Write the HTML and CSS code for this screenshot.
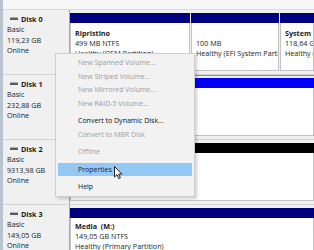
FILE: index.html
```html
<!DOCTYPE html>
<html lang="en">
<head>
    <meta charset="UTF-8">
    <meta name="viewport" content="width=device-width, initial-scale=1.0">
    <title>Disk Management</title>

    <link rel="stylesheet" href="styles.css">
</head>
<body>
    <div class="screen">
        <div class="edge"></div>
        <div class="main">
            <div class="topbar"></div>

            <!-- Disk 0 -->
            <div class="disk">
                <div class="label">
                    <div class="name"><span class="icon"></span>Disk 0</div>
                    <div>Basic</div>
                    <div>119,23 GB</div>
                    <div>Online</div>
                </div>
                <div class="parts">
                    <div class="part w-oem">
                        <div class="bar primary"></div>
                        <div class="box">
                            <div class="title">Ripristino</div>
                            <div>499 MB NTFS</div>
                            <div>Healthy (OEM Partition)</div>
                        </div>
                    </div>
                    <div class="part w-efi">
                        <div class="bar primary"></div>
                        <div class="box">
                            <div class="title"></div>
                            <div>100 MB</div>
                            <div>Healthy (EFI System Partition)</div>
                        </div>
                    </div>
                    <div class="part grow">
                        <div class="bar primary"></div>
                        <div class="box">
                            <div class="title">System</div>
                            <div>118,64 GB NTFS</div>
                            <div>Healthy (Boot, Page File)</div>
                        </div>
                    </div>
                </div>
            </div>

            <!-- Disk 1 -->
            <div class="disk">
                <div class="label">
                    <div class="name"><span class="icon"></span>Disk 1</div>
                    <div>Basic</div>
                    <div>232,88 GB</div>
                    <div>Online</div>
                </div>
                <div class="parts flush">
                    <div class="extended">
                        <div class="part grow">
                            <div class="bar logical"></div>
                            <div class="box tall"></div>
                        </div>
                    </div>
                </div>
            </div>

            <!-- Disk 2 -->
            <div class="disk">
                <div class="label">
                    <div class="name"><span class="icon"></span>Disk 2</div>
                    <div>Basic</div>
                    <div>9313,98 GB</div>
                    <div>Online</div>
                </div>
                <div class="parts">
                    <div class="part grow">
                        <div class="bar free"></div>
                        <div class="box"></div>
                    </div>
                </div>
            </div>

            <!-- Disk 3 -->
            <div class="disk">
                <div class="label">
                    <div class="name"><span class="icon"></span>Disk 3</div>
                    <div>Basic</div>
                    <div>149,05 GB</div>
                    <div>Online</div>
                </div>
                <div class="parts">
                    <div class="part grow">
                        <div class="bar primary"></div>
                        <div class="box low">
                            <div class="title">Media&nbsp; (M:)</div>
                            <div>149,05 GB NTFS</div>
                            <div>Healthy (Primary Partition)</div>
                        </div>
                    </div>
                </div>
            </div>
        </div>

        <!-- Context menu -->
        <ul class="menu">
            <li class="off">New Spanned Volume...</li>
            <li class="off">New Striped Volume...</li>
            <li class="off">New Mirrored Volume...</li>
            <li class="off">New RAID-5 Volume...</li>
            <li class="sep"></li>
            <li>Convert to Dynamic Disk...</li>
            <li class="off">Convert to MBR Disk</li>
            <li class="sep"></li>
            <li class="off">Offline</li>
            <li class="sep"></li>
            <li class="hot">Properties</li>
            <li class="sep"></li>
            <li>Help</li>
        </ul>

        <svg class="cursor" width="9" height="14" viewBox="0 0 9 14">
            <path d="M0.5 0.5 L0.5 11 L3 8.7 L4.8 12.6 L6.4 11.9 L4.7 8.2 L7.9 8.2 Z" fill="#fff" stroke="#222" stroke-width="1" stroke-linejoin="round"/>
        </svg>
    </div>
</body>
</html>
```

FILE: styles.css
```css
body {
    margin: 0;
    padding: 0;
    font-family: "Open Sans", "Noto Sans", sans-serif;
    font-size: 7.2px;
    color: #1c1c1c;
    background-color: #f0f0f0;
    overflow: hidden;
}

.screen {
    position: relative;
    display: flex;
    width: 314px;
    height: 250px;
    overflow: hidden;
}

.edge {
    width: 3px;
    flex-shrink: 0;
    background-color: #b9c3cd;
}

.main {
    flex: 1;
    display: flex;
    flex-direction: column;
    min-width: 0;
}

.topbar {
    height: 9px;
    flex-shrink: 0;
    background-color: #f7f7f7;
    border-bottom: 1px solid #d9d9d9;
}

/* Disk rows */
.disk {
    display: flex;
    height: 65px;
    flex-shrink: 0;
    box-sizing: border-box;
    border-bottom: 1px solid #d2d2d2;
}

.label {
    width: 67px;
    flex-shrink: 0;
    box-sizing: border-box;
    padding: 4px 0 0 4px;
    line-height: 10.3px;
    background-color: #f0f0f0;
    border-right: 1px solid #a8a8a8;
}

.label .name {
    font-weight: bold;
    padding-left: 3px;
}

.icon {
    display: inline-block;
    width: 8px;
    height: 2px;
    margin-right: 3px;
    vertical-align: 2px;
    background-color: #5c5c5c;
    border-top: 1px solid #b0b0b0;
}

.parts {
    flex: 1;
    display: flex;
    gap: 1px;
    padding-top: 3px;
    min-width: 0;
    background-color: #f0f0f0;
}

.parts.flush {
    padding-top: 0;
}

.part {
    display: flex;
    flex-direction: column;
    flex-shrink: 0;
}

.w-oem {
    width: 120px;
}

.w-efi {
    width: 88px;
}

.grow {
    flex: 1;
    min-width: 0;
}

.bar {
    height: 10px;
}

.primary {
    background-color: #00007f;
}

.logical {
    background-color: #0000f6;
}

.free {
    background-color: #000;
}

.box {
    height: 48px;
    box-sizing: border-box;
    padding: 5px 0 0 4px;
    line-height: 10px;
    white-space: nowrap;
    overflow: hidden;
    background-color: #fff;
    border: 1px solid #c3c3c3;
    border-top: none;
}

.box.tall {
    height: 48px;
}

.box.low {
    padding-top: 3px;
}

.title {
    font-weight: bold;
    height: 10px;
}

.extended {
    flex: 1;
    display: flex;
    padding: 2px 0 1px 1px;
    border-top: 1px solid #58b858;
    border-bottom: 1px solid #5f9f6a;
    height: 61px;
}

/* Context menu */
.menu {
    position: absolute;
    left: 55px;
    top: 53px;
    width: 140px;
    height: 144px;
    margin: 0;
    padding: 2px 0 0 0;
    list-style-type: none;
    box-sizing: border-box;
    background-color: #f2f2f2;
    border: 1px solid #cfcfcf;
    box-shadow: 2px 2px 3px rgba(0, 0, 0, 0.18);
    font-size: 7px;
}

.menu li {
    height: 13.5px;
    line-height: 13.5px;
    margin: 0 2px;
    padding-left: 20px;
    white-space: nowrap;
    color: #111;
}

.menu li.off {
    color: #9d9d9d;
}

.menu li.sep {
    height: 4px;
}

.menu li.hot {
    background-color: #93c8f2;
    color: #15204a;
}

.cursor {
    position: absolute;
    left: 114px;
    top: 166px;
}
```
